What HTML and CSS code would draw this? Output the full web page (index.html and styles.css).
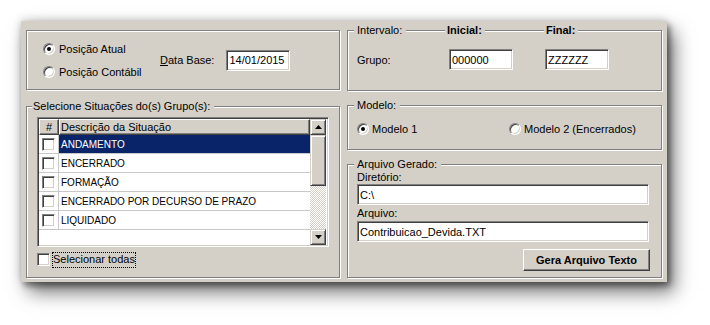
FILE: index.html
```html
<!DOCTYPE html>
<html lang="pt">
<head>
<meta charset="utf-8">
<title>Gera Arquivo Texto</title>
<link rel="stylesheet" href="styles.css">
</head>
<body>
<div class="window">
  <div class="col col-l">
    <div class="box box-pos">
      <div class="radios">
        <div class="opt"><span class="radio on"></span><span>Posição Atual</span></div>
        <div class="opt"><span class="radio"></span><span>Posição Contábil</span></div>
      </div>
      <span class="lbl-date"><u>D</u>ata Base:</span>
      <div class="field date">14/01/2015</div>
    </div>

    <fieldset class="box box-sit">
      <legend class="lg lg-sit">Selecione Situações do(s) Grupo(s):</legend>
      <div class="sit-body">
        <div class="grid">
          <div class="grid-data">
            <div class="gh">
              <div class="hc1">#</div>
              <div class="hc2">Descrição da Situação</div>
            </div>
            <div class="row sel"><div class="c1"><span class="check"></span></div><div class="c2">ANDAMENTO</div></div>
            <div class="row"><div class="c1"><span class="check"></span></div><div class="c2">ENCERRADO</div></div>
            <div class="row"><div class="c1"><span class="check"></span></div><div class="c2">FORMAÇÃO</div></div>
            <div class="row"><div class="c1"><span class="check"></span></div><div class="c2">ENCERRADO POR DECURSO DE PRAZO</div></div>
            <div class="row"><div class="c1"><span class="check"></span></div><div class="c2">LIQUIDADO</div></div>
          </div>
          <div class="vscroll">
            <div class="sb-btn"><svg width="7" height="4" viewBox="0 0 7 4"><polygon points="3.5,0 7,4 0,4" fill="#000"/></svg></div>
            <div class="sb-thumb"></div>
            <div class="sb-track"></div>
            <div class="sb-btn"><svg width="7" height="4" viewBox="0 0 7 4"><polygon points="0,0 7,0 3.5,4" fill="#000"/></svg></div>
          </div>
        </div>
        <div class="selall"><span class="check"></span><span class="focus">Selecionar todas</span></div>
      </div>
    </fieldset>
  </div>

  <div class="col col-r">
    <fieldset class="box box-int">
      <legend class="lg">Intervalo:</legend>
      <div class="int-grid">
        <span class="hd hd-ini">Inicial:</span>
        <span class="hd hd-fin">Final:</span>
        <span class="grp">Grupo:</span>
        <div class="field code">000000</div>
        <div class="field code">ZZZZZZ</div>
      </div>
    </fieldset>

    <fieldset class="box box-mod">
      <legend class="lg">Modelo:</legend>
      <div class="mod-body">
        <div class="opt opt-m1"><span class="radio on"></span><span>Modelo 1</span></div>
        <div class="opt"><span class="radio"></span><span>Modelo 2 (Encerrados)</span></div>
      </div>
    </fieldset>

    <fieldset class="box box-arq">
      <legend class="lg">Arquivo Gerado:</legend>
      <div class="arq-body">
        <span class="cap">Diretório:</span>
        <div class="field wide">C:\</div>
        <span class="cap cap2">Arquivo:</span>
        <div class="field wide wide2">Contribuicao_Devida.TXT</div>
        <div class="btn">Gera Arquivo Texto</div>
      </div>
    </fieldset>
  </div>
</div>
</body>
</html>
```

FILE: styles.css
```css
* { box-sizing: border-box; }

html { background: #fff; }

body {
  margin: 0;
  min-height: 325px;
  background: #fff;
  padding: 21px 0 43px 21px;
  font: 11px "Liberation Sans", Arial, sans-serif;
  color: #000;
}

.window {
  width: 646px;
  height: 261px;
  background: #d4d0c8;
  padding: 3px 5px 4px;
  display: flex;
  gap: 7px;
  box-shadow:
    3px 4px 6px rgba(0, 0, 0, 0.4),
    7px 10px 18px rgba(0, 0, 0, 0.55),
    -1px -2px 8px rgba(0, 0, 0, 0.14);
}

.col { display: flex; flex-direction: column; }
.col-l { width: 314px; }
.col-r { width: 315px; }

.box {
  margin: 0;
  padding: 0;
  min-width: 0;
  border: 1px solid #808080;
  box-shadow: inset 1px 1px #fff, 1px 1px #fff;
}

.lg {
  background: #d4d0c8;
  line-height: 13px;
  padding: 0 4px 0 3px;
  margin-left: 6px;
}
.lg-sit { margin-left: 5px; padding-left: 1px; }

/* common controls */
.opt { display: flex; align-items: center; height: 17px; gap: 4px; }

.radio {
  position: relative;
  width: 12px;
  height: 12px;
  border-radius: 50%;
  border: 1px solid;
  border-color: #808080 #fff #fff #808080;
  background: #fff;
  box-shadow: inset 1px 1px #404040, inset -1px -1px #d4d0c8;
  flex: none;
}
.radio.on::after {
  content: "";
  position: absolute;
  left: 3px;
  top: 3px;
  width: 4px;
  height: 4px;
  border-radius: 50%;
  background: #000;
}

.check {
  width: 13px;
  height: 13px;
  border: 1px solid;
  border-color: #808080 #fff #fff #808080;
  background: #fff;
  box-shadow: inset 1px 1px #404040, inset -1px -1px #d4d0c8;
  flex: none;
}

.field {
  height: 21px;
  border: 1px solid;
  border-color: #808080 #fff #fff #808080;
  background: #fff;
  box-shadow: inset 1px 1px #404040, inset -1px -1px #d4d0c8;
  padding: 0 2px;
  display: flex;
  align-items: center;
  white-space: nowrap;
}

/* Posição box */
.box-pos {
  margin-top: 6px;
  height: 60px;
  display: flex;
  align-items: center;
  padding-left: 16px;
}
.radios { width: 117px; display: flex; flex-direction: column; gap: 6px; }
.lbl-date { margin-right: 12px; }
.date { width: 64px; }

/* Situações box */
.box-sit { margin-top: 10px; flex: 1; }
.sit-body { padding: 4px 0 0 10px; }

.grid {
  width: 292px;
  height: 130px;
  border: 1px solid;
  border-color: #808080 #fff #fff #808080;
  box-shadow: inset 1px 1px #404040, inset -1px -1px #d4d0c8;
  padding: 1px;
  background: #fff;
  display: flex;
}
.grid-data { width: 271px; display: flex; flex-direction: column; }

.gh { display: flex; height: 16px; }
.gh > div {
  background: #d4d0c8;
  border: 1px solid;
  border-color: #fff #404040 #404040 #fff;
  box-shadow: inset -1px -1px #808080;
  display: flex;
  align-items: center;
}
.hc1 { width: 20px; justify-content: center; }
.hc2 { flex: 1; padding-left: 1px; }

.row { display: flex; height: 19px; border-bottom: 1px solid #c8c8c8; }
.row .c1 {
  width: 20px;
  border-right: 1px solid #c8c8c8;
  display: flex;
  align-items: center;
  justify-content: center;
}
.row .c2 { flex: 1; padding-left: 2px; display: flex; align-items: center; font-size: 10px; }
.row.sel .c2 { background: #0a246a; color: #fff; }

.vscroll { width: 16px; display: flex; flex-direction: column; }
.sb-btn, .sb-thumb {
  background: #d4d0c8;
  border: 1px solid;
  border-color: #d4d0c8 #404040 #404040 #d4d0c8;
  box-shadow: inset 1px 1px #fff, inset -1px -1px #808080;
}
.sb-btn { height: 16px; display: flex; align-items: center; justify-content: center; }
.sb-btn svg { display: block; }
.sb-thumb { height: 51px; }
.sb-track {
  flex: 1;
  background: repeating-conic-gradient(#d4d0c8 0 25%, #fff 0 50%) 0 0 / 2px 2px;
}

.selall { display: flex; align-items: center; height: 17px; margin-top: 4px; }
.focus { margin-left: 2px; padding: 1px 1px 2px; outline: 1px dotted #000; outline-offset: -1px; line-height: 13px; }

/* Intervalo box */
.box-int { height: 67px; }
.int-grid {
  display: grid;
  grid-template-columns: 92px 96px 64px;
  padding: 12px 0 0 9px;
  align-items: center;
}
.hd {
  grid-row: 1;
  align-self: start;
  justify-self: start;
  margin-top: -25px;
  line-height: 13px;
  font-weight: bold;
  background: #d4d0c8;
  padding: 0 3px 0 2px;
}
.hd-ini { grid-column: 2; margin-left: -4px; }
.hd-fin { grid-column: 3; margin-left: -1px; }
.grp { grid-row: 2; grid-column: 1; }
.code { grid-row: 2; width: 64px; }

/* Modelo box */
.box-mod { margin-top: 8px; height: 51px; }
.mod-body { display: flex; align-items: center; padding: 8px 0 0 9px; }
.mod-body .opt { gap: 3px; }
.opt-m1 { width: 152px; }

/* Arquivo box */
.box-arq { margin-top: 8px; flex: 1; }
.arq-body { display: flex; flex-direction: column; padding: 0 11px 0 9px; }
.cap { line-height: 13px; }
.cap2 { margin-top: 2px; }
.wide { width: 292px; }
.wide2 { margin-top: 1px; }
.btn {
  align-self: flex-end;
  margin-top: 7px;
  width: 127px;
  height: 22px;
  background: #d4d0c8;
  border: 1px solid;
  border-color: #fff #404040 #404040 #fff;
  box-shadow: inset -1px -1px #808080;
  font-weight: bold;
  display: flex;
  align-items: center;
  justify-content: center;
}
```
